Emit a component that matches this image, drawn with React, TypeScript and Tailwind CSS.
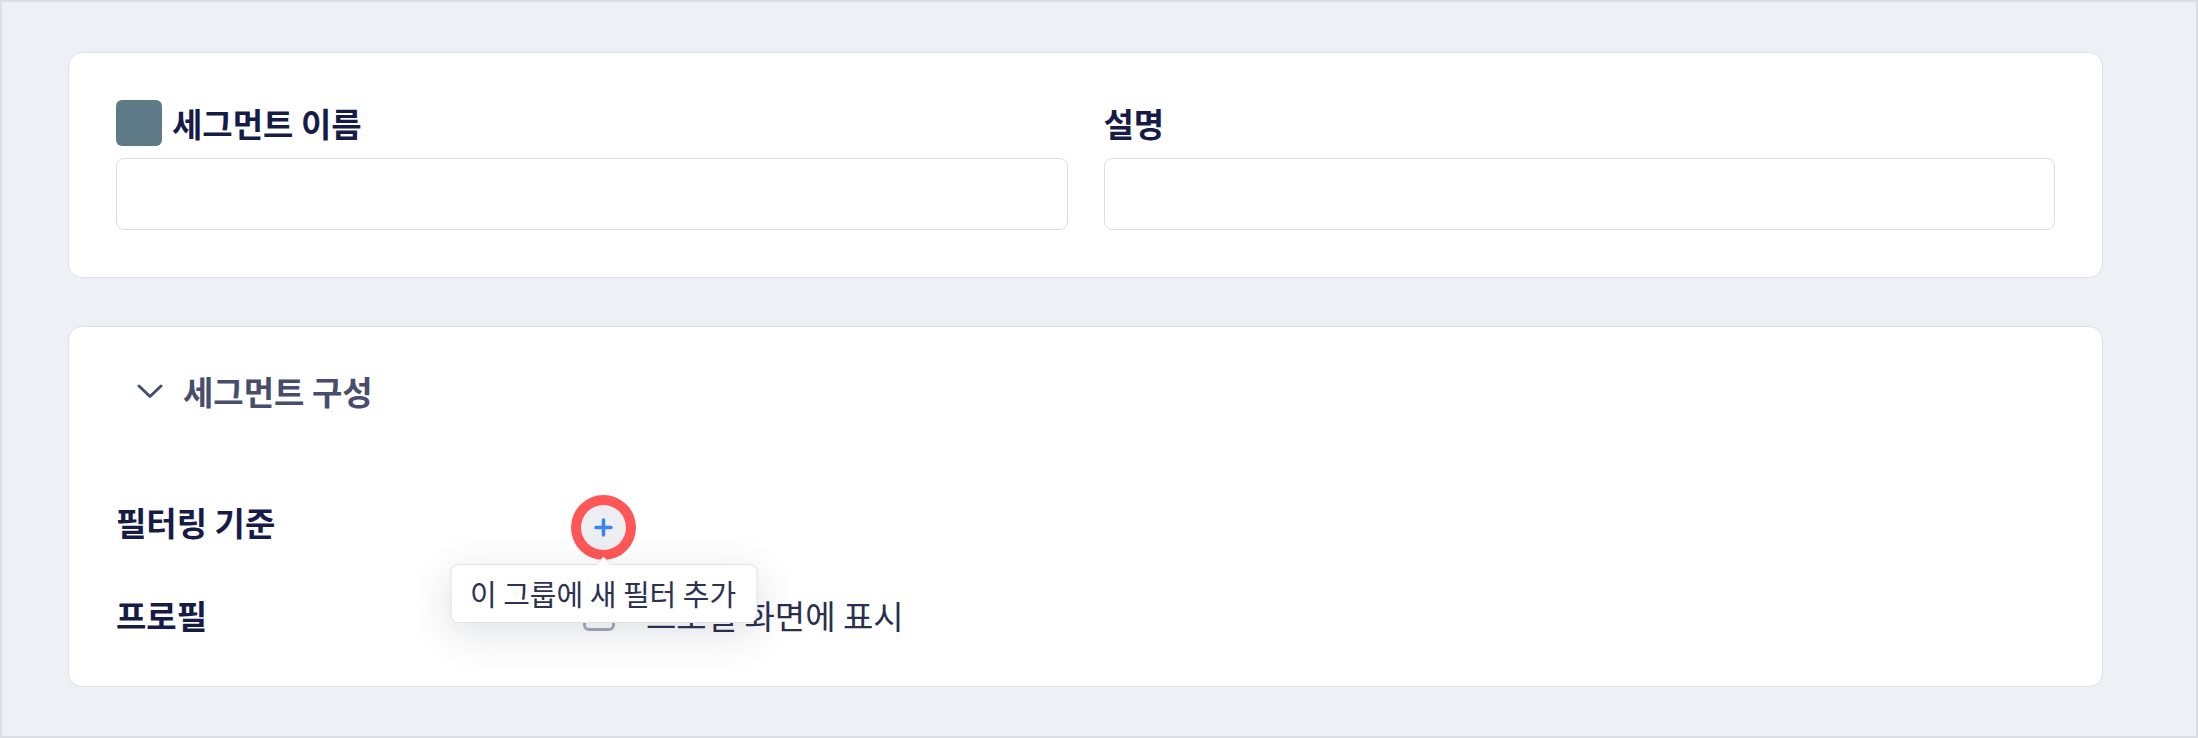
import React from "react";

const font = { fontFamily: '"Noto Sans CJK KR", "Noto Sans", sans-serif' };

function Chevron() {
  return (
    <svg width="26" height="15" viewBox="0 0 26 15" fill="none">
      <polyline points="2,2 13,12.5 24,2" stroke="#4a4f70" strokeWidth="3" strokeLinecap="round" strokeLinejoin="round" />
    </svg>
  );
}

function Plus() {
  return (
    <svg width="19" height="19" viewBox="0 0 19 19" fill="none">
      <path d="M9.5 2v15M2 9.5h15" stroke="#3d83f5" strokeWidth="3.5" strokeLinecap="round" />
    </svg>
  );
}

export default function App() {
  return (
    <div
      className="w-[2198px] h-[738px] border-2 border-[#dcdee3] bg-[#edf0f4] pl-[66px] pr-[93px] pt-[50px] overflow-hidden"
      style={font}
    >
      {/* Card 1 */}
      <div className="bg-white border border-[#dfe1e6] rounded-[14px] px-[47px] pt-[47px] pb-[47px]">
        <div className="grid grid-cols-2 gap-x-[36px]">
          <div className="flex flex-col">
            <div className="h-[46px] flex items-center gap-[10px]">
              <div className="w-[46px] h-[46px] rounded-[6px] bg-[#5f7a87]" />
              <span className="text-[33px] leading-none font-bold text-[#171c47]">세그먼트 이름</span>
            </div>
            <input className="mt-[12px] h-[72px] rounded-[8px] border-[1.5px] border-[#dcdde3] bg-white outline-none" />
          </div>
          <div className="flex flex-col">
            <div className="h-[46px] flex items-center">
              <span className="text-[33px] leading-none font-bold text-[#171c47]">설명</span>
            </div>
            <input className="mt-[12px] h-[72px] rounded-[8px] border-[1.5px] border-[#dcdde3] bg-white outline-none" />
          </div>
        </div>
      </div>

      {/* Card 2 */}
      <div className="mt-[48px] bg-white border border-[#dfe1e6] rounded-[14px] px-[47px] pt-[47px] pb-[51px]">
        <div className="h-[34px] flex items-center pl-[21px] gap-[20px]">
          <Chevron />
          <span className="text-[33px] leading-none font-semibold text-[#484d6e]">세그먼트 구성</span>
        </div>

        <div className="mt-[96px] h-[46px] flex items-center">
          <div className="w-[465px] text-[33px] leading-none font-bold text-[#171c47] -mt-[9px]">필터링 기준</div>
          <div className="relative">
            <button className="w-[45px] h-[45px] rounded-full bg-[#eceef2] ring-[10px] ring-[#ff5757] flex items-center justify-center">
              <Plus />
            </button>
            <div className="absolute z-10 top-[59px] left-1/2 -translate-x-1/2 w-[307px] h-[59px] bg-white border border-[#dfe1e7] rounded-[8px] shadow-[0_10px_40px_rgba(30,35,60,0.14)] flex items-center pl-[19px] whitespace-nowrap">
              <div className="absolute -top-[6px] left-1/2 -translate-x-1/2 w-[11px] h-[11px] rotate-45 bg-white border-l border-t border-[#dfe1e7]" />
              <span className="relative text-[29px] leading-none text-[#2d3250]">이 그룹에 새 필터 추가</span>
            </div>
          </div>
        </div>

        <div className="mt-[45px] h-[40px] flex items-center">
          <div className="w-[467px] text-[33px] leading-none font-bold text-[#171c47]">프로필</div>
          <div className="flex items-center gap-[31px]">
            <div className="w-[32px] h-[32px] rounded-[6px] border-[3px] border-[#a6aabd] bg-white" />
            <span className="text-[33px] leading-none text-[#2a2f4f]">프로필 화면에 표시</span>
          </div>
        </div>
      </div>
    </div>
  );
}
